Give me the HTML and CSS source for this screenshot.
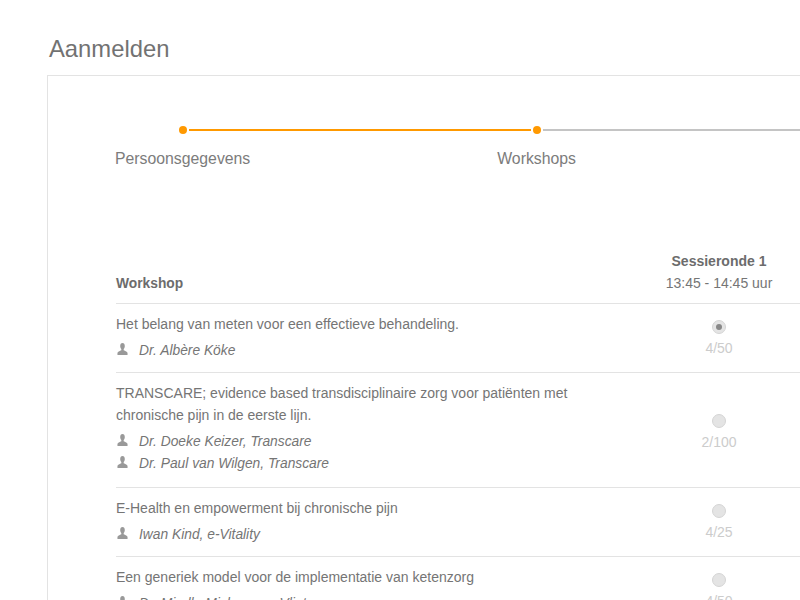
FILE: index.html
```html
<!DOCTYPE html>
<html lang="nl">
<head>
    <meta charset="UTF-8">
    <meta name="viewport" content="width=device-width, initial-scale=1.0">
    <title>Aanmelden</title>
    <link rel="stylesheet" href="styles.css">
</head>
<body>
    <svg class="icon-defs" width="0" height="0">
        <symbol id="person" viewBox="0 0 12 12" preserveAspectRatio="none">
            <path d="M6 0C4.400 0 3.500 1.200 3.500 3c0 1.300.5 2.400 1.200 3v1.200C3 8 .8 8.500.5 10v2h11v-2c-.3-1.500-2.500-2-4.200-2.800V6c.7-.6 1.200-1.700 1.200-3C8.500 1.200 7.600 0 6 0z" />
        </symbol>
    </svg>

    <h1 class="title">Aanmelden</h1>

    <div class="panel">
        <div class="step-track">
            <span class="step-dot"></span>
            <span class="step-line done"></span>
            <span class="step-dot"></span>
            <span class="step-line"></span>
        </div>
        <div class="step-labels">
            <div class="step-label">Persoonsgegevens</div>
            <div class="step-label">Workshops</div>
        </div>

        <div class="table-head">
            <div class="head-workshop">Workshop</div>
            <div class="head-session">
                <div class="session-name">Sessieronde 1</div>
                <div class="session-time">13:45 - 14:45 uur</div>
            </div>
        </div>

        <div class="row">
            <div class="row-info">
                <div class="row-title">Het belang van meten voor een effectieve behandeling.</div>
                <div class="speakers">
                    <div class="speaker"><svg class="person"><use href="#person" /></svg>Dr. Albère Köke</div>
                </div>
            </div>
            <div class="row-choice">
                <span class="radio checked"></span>
                <div class="seats">4/50</div>
            </div>
        </div>

        <div class="row">
            <div class="row-info">
                <div class="row-title">TRANSCARE; evidence based transdisciplinaire zorg voor patiënten met chronische pijn in de eerste lijn.</div>
                <div class="speakers">
                    <div class="speaker"><svg class="person"><use href="#person" /></svg>Dr. Doeke Keizer, Transcare</div>
                    <div class="speaker"><svg class="person"><use href="#person" /></svg>Dr. Paul van Wilgen, Transcare</div>
                </div>
            </div>
            <div class="row-choice tall">
                <span class="radio"></span>
                <div class="seats">2/100</div>
            </div>
        </div>

        <div class="row">
            <div class="row-info">
                <div class="row-title">E-Health en empowerment bij chronische pijn</div>
                <div class="speakers">
                    <div class="speaker"><svg class="person"><use href="#person" /></svg>Iwan Kind, e-Vitality</div>
                </div>
            </div>
            <div class="row-choice">
                <span class="radio"></span>
                <div class="seats">4/25</div>
            </div>
        </div>

        <div class="row">
            <div class="row-info">
                <div class="row-title">Een generiek model voor de implementatie van ketenzorg</div>
                <div class="speakers">
                    <div class="speaker"><svg class="person"><use href="#person" /></svg>Dr. Mirella Michon van Vliet</div>
                </div>
            </div>
            <div class="row-choice">
                <span class="radio"></span>
                <div class="seats">4/50</div>
            </div>
        </div>
    </div>
</body>
</html>
```

FILE: styles.css
```css
html, body {
    height: 100%;
    overflow: hidden;
}

body {
    margin: 0;
    padding: 35px 0 0 47px;
    box-sizing: border-box;
    background: #fff;
    font-family: "Liberation Sans", Arial, sans-serif;
    color: #757575;
}

.icon-defs {
    position: absolute;
}

.title {
    margin: 0 0 13px 2px;
    font-size: 23.800px;
    line-height: 27px;
    font-weight: normal;
    color: #727272;
}

.panel {
    width: 900px;
    padding: 49px 0 0 68px;
    border: 1px solid #e3e3e3;
    border-right: none;
}

.step-track {
    display: flex;
    align-items: center;
    height: 10px;
    margin-left: 63px;
}

.step-dot {
    width: 8px;
    height: 8px;
    flex: none;
    border-radius: 50%;
    background: #f90;
}

.step-line {
    flex: 1;
    height: 2px;
    margin: 0 2px;
    background: #c4c4c4;
}

.step-line.done {
    flex: none;
    width: 342px;
    background: #f90;
}

.step-labels {
    display: flex;
    gap: 247px;
    margin: 14px 0 81px -1px;
}

.step-label {
    font-size: 15.800px;
    line-height: 20px;
    color: #7c7c7c;
}

.table-head {
    display: flex;
    align-items: flex-end;
    width: 806px;
    padding-bottom: 9px;
    border-bottom: 1px solid #e3e3e3;
    box-sizing: border-box;
}

.head-workshop {
    width: 501px;
    flex: none;
    font-size: 13.800px;
    line-height: 20px;
    font-weight: bold;
    color: #6c6c6c;
}

.head-session {
    width: 204px;
    flex: none;
    text-align: center;
    font-size: 14px;
    line-height: 22px;
}

.session-name {
    font-weight: bold;
    color: #6c6c6c;
}

.row {
    display: flex;
    width: 806px;
    padding: 9px 0 10px;
    box-sizing: border-box;
    border-bottom: 1px solid #e3e3e3;
}

.row-info {
    width: 501px;
    flex: none;
    font-size: 14px;
    line-height: 22px;
}

.row-title {
    width: 480px;
}

.speakers {
    margin-top: 5px;
}

.speaker {
    display: flex;
    align-items: center;
    font-size: 13.800px;
    font-style: italic;
}

.speaker + .speaker {
    margin-bottom: 2px;
}

.person {
    width: 11px;
    height: 12px;
    flex: none;
    margin: -4px 11px 0 1px;
    fill: #999;
}

.row-choice {
    width: 204px;
    flex: none;
    display: flex;
    flex-direction: column;
    align-items: center;
    justify-content: center;
    padding-top: 2px;
}

.row-choice.tall {
    padding-top: 6px;
}

.radio {
    width: 14px;
    height: 14px;
    box-sizing: border-box;
    border-radius: 50%;
    border: 1px solid #d5d5d5;
    background: #e4e4e4;
    display: flex;
    align-items: center;
    justify-content: center;
}

.radio.checked::after {
    content: '';
    width: 6px;
    height: 6px;
    border-radius: 50%;
    background: #888;
}

.seats {
    margin-top: 5px;
    font-size: 14px;
    line-height: 18px;
    color: #ccc;
}
```
